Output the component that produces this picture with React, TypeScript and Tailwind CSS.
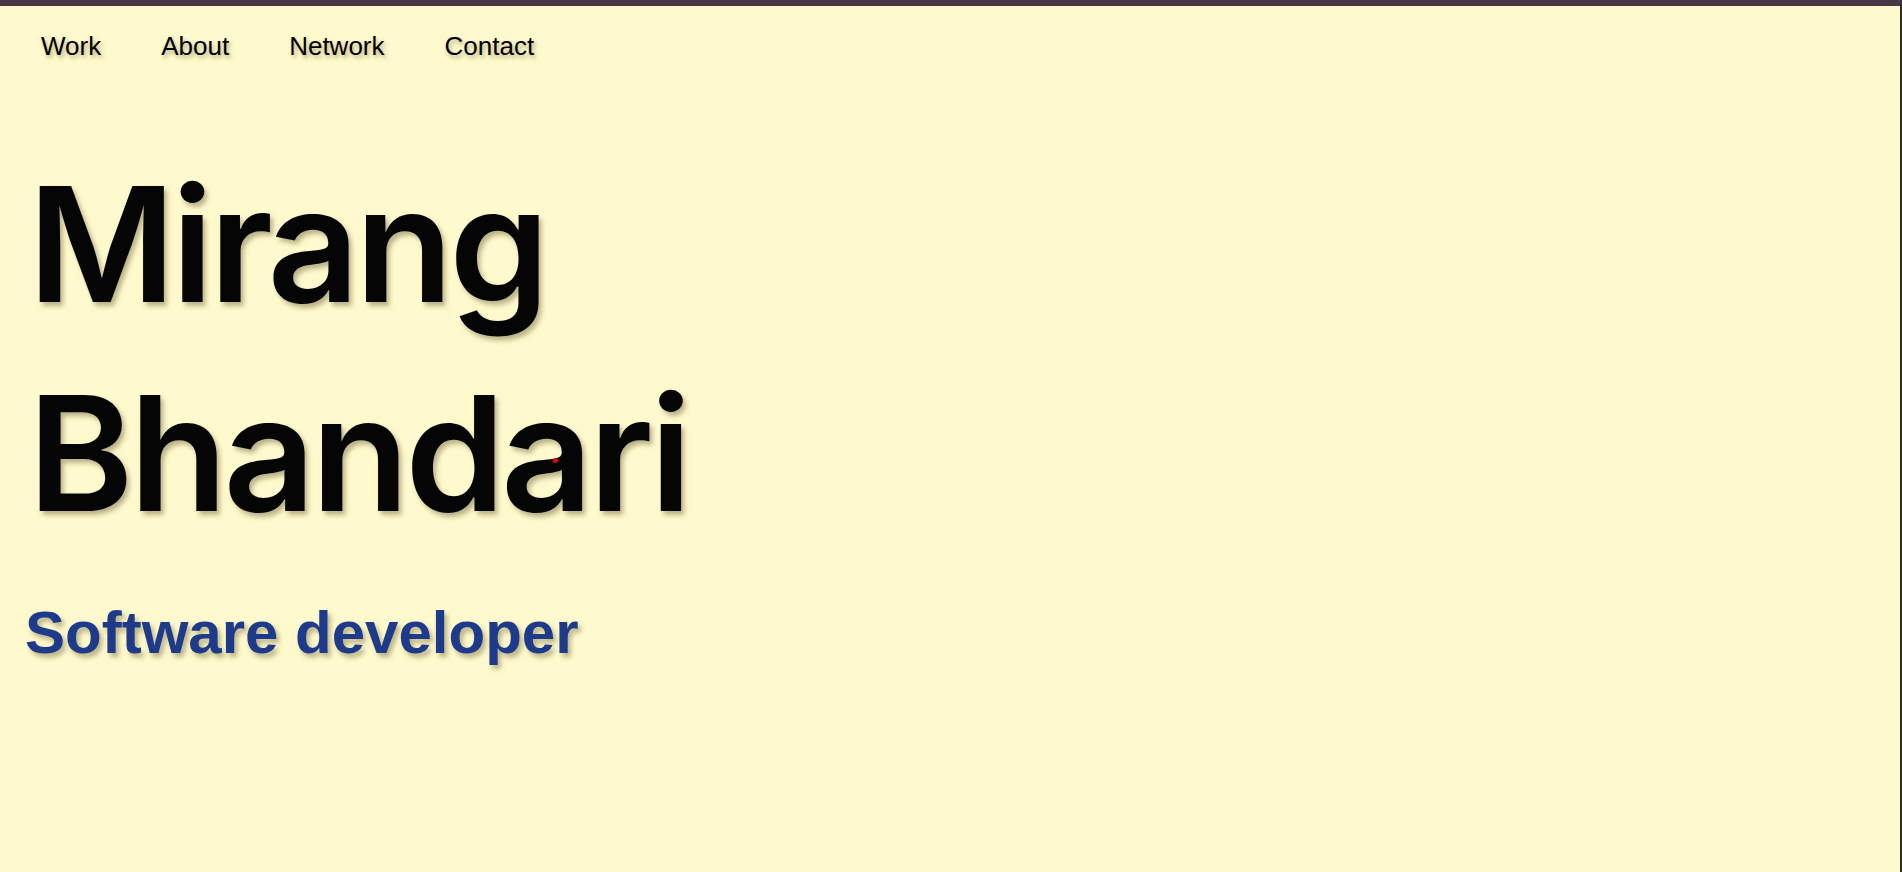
import React from 'react';

const navItems = ['Work', 'About', 'Network', 'Contact'];

const App: React.FC = () => {
  return (
    <div className="min-h-[872px] bg-[#fffacd] border-t-[6px] border-t-[#483747] border-r-2 border-r-[#2e2a2a] font-['Liberation_Sans',sans-serif]">
      {/* Nav */}
      <nav className="flex pl-[11px] pt-[21px]">
        {navItems.map((item) => (
          <a
            key={item}
            href="#"
            className="px-[30px] text-[26px] text-black [text-shadow:2px_3px_4px_rgba(90,80,40,0.45)]"
          >
            {item}
          </a>
        ))}
      </nav>

      {/* Hero */}
      <main className="pl-[25px]">
        <h1 className="relative ml-[3px] mt-[74px] font-['Inter',sans-serif] text-[160px] font-semibold leading-[209px] tracking-[-4px] text-[#050505] [text-shadow:3px_4px_5px_rgba(80,70,30,0.4)]">
          Mirang
          <br />
          Bhandari
          <span className="absolute left-[525px] top-[318px] h-[5px] w-[5px] rounded-full bg-red-600" />
        </h1>
        <h2 className="mt-[45px] text-6xl font-bold text-[#1e3a8a] [text-shadow:3px_4px_5px_rgba(80,70,30,0.4)]">
          Software developer
        </h2>
      </main>
    </div>
  );
};

export default App;
